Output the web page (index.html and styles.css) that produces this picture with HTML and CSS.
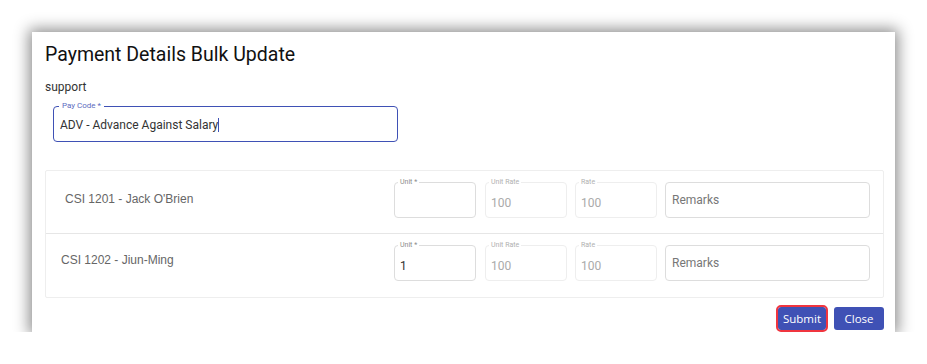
FILE: index.html
```html
<!DOCTYPE html>
<html lang="en">
<head>
    <meta charset="UTF-8">
    <meta name="viewport" content="width=device-width, initial-scale=1.0">
    <title>Payment Details Bulk Update</title>
    <link rel="stylesheet" href="styles.css">
</head>
<body>

<div class="dialog">
    <h1>Payment Details Bulk Update</h1>
    <div class="user">support</div>
    <div class="paycode">
        <span class="paycode-label">Pay Code *</span>
        <span class="paycode-value">ADV - Advance Against Salary</span><span class="caret"></span>
    </div>

    <div class="rows">
        <div class="row">
            <div class="emp emp-first">CSI 1201 - Jack O'Brien</div>
            <div class="field unit">
                <span class="field-label">Unit *</span>
                <span class="field-value"></span>
            </div>
            <div class="field disabled">
                <span class="field-label">Unit Rate</span>
                <span class="field-value">100</span>
            </div>
            <div class="field disabled">
                <span class="field-label">Rate</span>
                <span class="field-value">100</span>
            </div>
            <div class="field remarks">
                <span class="placeholder">Remarks</span>
            </div>
        </div>
        <div class="row">
            <div class="emp">CSI 1202 - Jiun-Ming</div>
            <div class="field unit">
                <span class="field-label">Unit *</span>
                <span class="field-value">1</span>
            </div>
            <div class="field disabled">
                <span class="field-label">Unit Rate</span>
                <span class="field-value">100</span>
            </div>
            <div class="field disabled">
                <span class="field-label">Rate</span>
                <span class="field-value">100</span>
            </div>
            <div class="field remarks">
                <span class="placeholder">Remarks</span>
            </div>
        </div>
    </div>

    <div class="actions">
        <button class="btn btn-focus">Submit</button>
        <button class="btn">Close</button>
    </div>
</div>

</body>
</html>
```

FILE: styles.css
```css
body {
    margin: 0;
    padding: 0;
    background: #fff;
    font-family: 'Roboto', sans-serif;
    color: #333;
}
.dialog {
    width: 863px;
    height: 300px;
    margin: 32px 0 0 32px;
    box-sizing: border-box;
    padding: 11px 11px 0 13px;
    background: #fff;
    box-shadow: 0 0 14px 3px rgba(0,0,0,0.45);
}
h1 {
    margin: 0;
    font-size: 19.5px;
    line-height: 24px;
    font-weight: 400;
    color: #111;
}
.user {
    margin-top: 12px;
    font-size: 12px;
    line-height: 16px;
    color: #333;
}
.paycode {
    position: relative;
    display: flex;
    align-items: center;
    width: 345px;
    height: 36px;
    margin: 11px 0 0 8px;
    box-sizing: border-box;
    padding: 2px 0 0 6px;
    border: 1.5px solid #3f51b5;
    border-radius: 4px;
}
.paycode-label {
    position: absolute;
    top: -6px;
    left: 5px;
    padding: 0 3px;
    background: #fff;
    font-size: 8px;
    line-height: 10px;
    color: #5c6bc0;
}
.paycode-value {
    font-size: 12px;
    color: #333;
}
.caret {
    display: inline-block;
    width: 1px;
    height: 14px;
    background: #3f51b5;
}
.rows {
    margin-top: 28px;
    border: 1px solid #eee;
    border-radius: 2px;
}
.row {
    display: flex;
    align-items: center;
    gap: 8px;
    height: 62px;
    box-sizing: border-box;
    padding: 0 13px 4px 15px;
}
.row + .row {
    border-top: 1px solid #e6e6e6;
    height: 64px;
    padding-bottom: 6px;
}
.emp {
    flex: 1;
    margin-bottom: 3px;
    font-family: 'Liberation Sans', Arial, sans-serif;
    font-size: 12px;
    color: #666;
}
.row + .row .emp {
    margin-bottom: 5px;
}
.emp-first {
    padding-left: 4px;
}
.field {
    position: relative;
    display: flex;
    align-items: center;
    width: 82px;
    height: 36px;
    box-sizing: border-box;
    padding: 6px 0 0 5px;
    border: 1px solid #ddd;
    border-radius: 4px;
}
.field.unit {
    margin-right: 1px;
}
.field.disabled {
    border-color: #eee;
}
.field-label {
    position: absolute;
    top: -5px;
    left: 3px;
    padding: 0 2px;
    background: #fff;
    font-size: 7px;
    line-height: 9px;
    color: #8a8a8a;
}
.field.disabled .field-label {
    color: #b0b0b0;
}
.field-value {
    font-size: 12px;
    color: #333;
}
.field.disabled .field-value {
    color: #aaa;
}
.field.remarks {
    width: 205px;
    padding: 0 0 0 6px;
}
.placeholder {
    font-size: 12px;
    color: #777;
}
.actions {
    display: flex;
    justify-content: flex-end;
    gap: 8px;
    margin-top: 9px;
}
.btn {
    min-width: 50px;
    height: 23px;
    padding: 0 4px;
    border: none;
    border-radius: 3px;
    background: #3f51b5;
    color: #fff;
    font-family: 'Open Sans', sans-serif;
    font-size: 11.5px;
    cursor: pointer;
}
.btn-focus {
    min-width: 48px;
    outline: 2px solid #f0353f;
    outline-offset: 0;
}
```
